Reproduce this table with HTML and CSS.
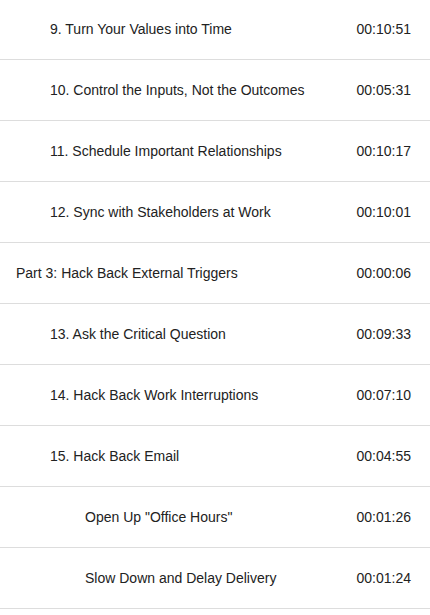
FILE: index.html
```html
<!DOCTYPE html>
<html>
<head>
<meta charset="utf-8">
<link rel="stylesheet" href="styles.css">
</head>
<body>
<ul class="toc">
  <li class="row lvl1"><span class="title">9. Turn Your Values into Time</span><span class="time">00:10:51</span></li>
  <li class="row lvl1"><span class="title">10. Control the Inputs, Not the Outcomes</span><span class="time">00:05:31</span></li>
  <li class="row lvl1"><span class="title">11. Schedule Important Relationships</span><span class="time">00:10:17</span></li>
  <li class="row lvl1"><span class="title">12. Sync with Stakeholders at Work</span><span class="time">00:10:01</span></li>
  <li class="row lvl0"><span class="title">Part 3: Hack Back External Triggers</span><span class="time">00:00:06</span></li>
  <li class="row lvl1"><span class="title">13. Ask the Critical Question</span><span class="time">00:09:33</span></li>
  <li class="row lvl1"><span class="title">14. Hack Back Work Interruptions</span><span class="time">00:07:10</span></li>
  <li class="row lvl1"><span class="title">15. Hack Back Email</span><span class="time">00:04:55</span></li>
  <li class="row lvl2"><span class="title">Open Up "Office Hours"</span><span class="time">00:01:26</span></li>
  <li class="row lvl2"><span class="title">Slow Down and Delay Delivery</span><span class="time">00:01:24</span></li>
</ul>
</body>
</html>
```
FILE: styles.css
```css
html, body {
  margin: 0;
  padding: 0;
  background: #fff;
}
body {
  font-family: "Liberation Sans", Arial, sans-serif;
  font-size: 14px;
  color: #222;
}
.toc {
  list-style: none;
  margin: -1px 0 0 0;
  padding: 0;
}
.row {
  display: flex;
  align-items: center;
  justify-content: space-between;
  height: 60px;
  border-bottom: 1px solid #ddd;
  padding-right: 19px;
}
.lvl0 { padding-left: 16px; }
.lvl1 { padding-left: 50px; }
.lvl2 { padding-left: 85px; }
.time {
  flex-shrink: 0;
}
```
